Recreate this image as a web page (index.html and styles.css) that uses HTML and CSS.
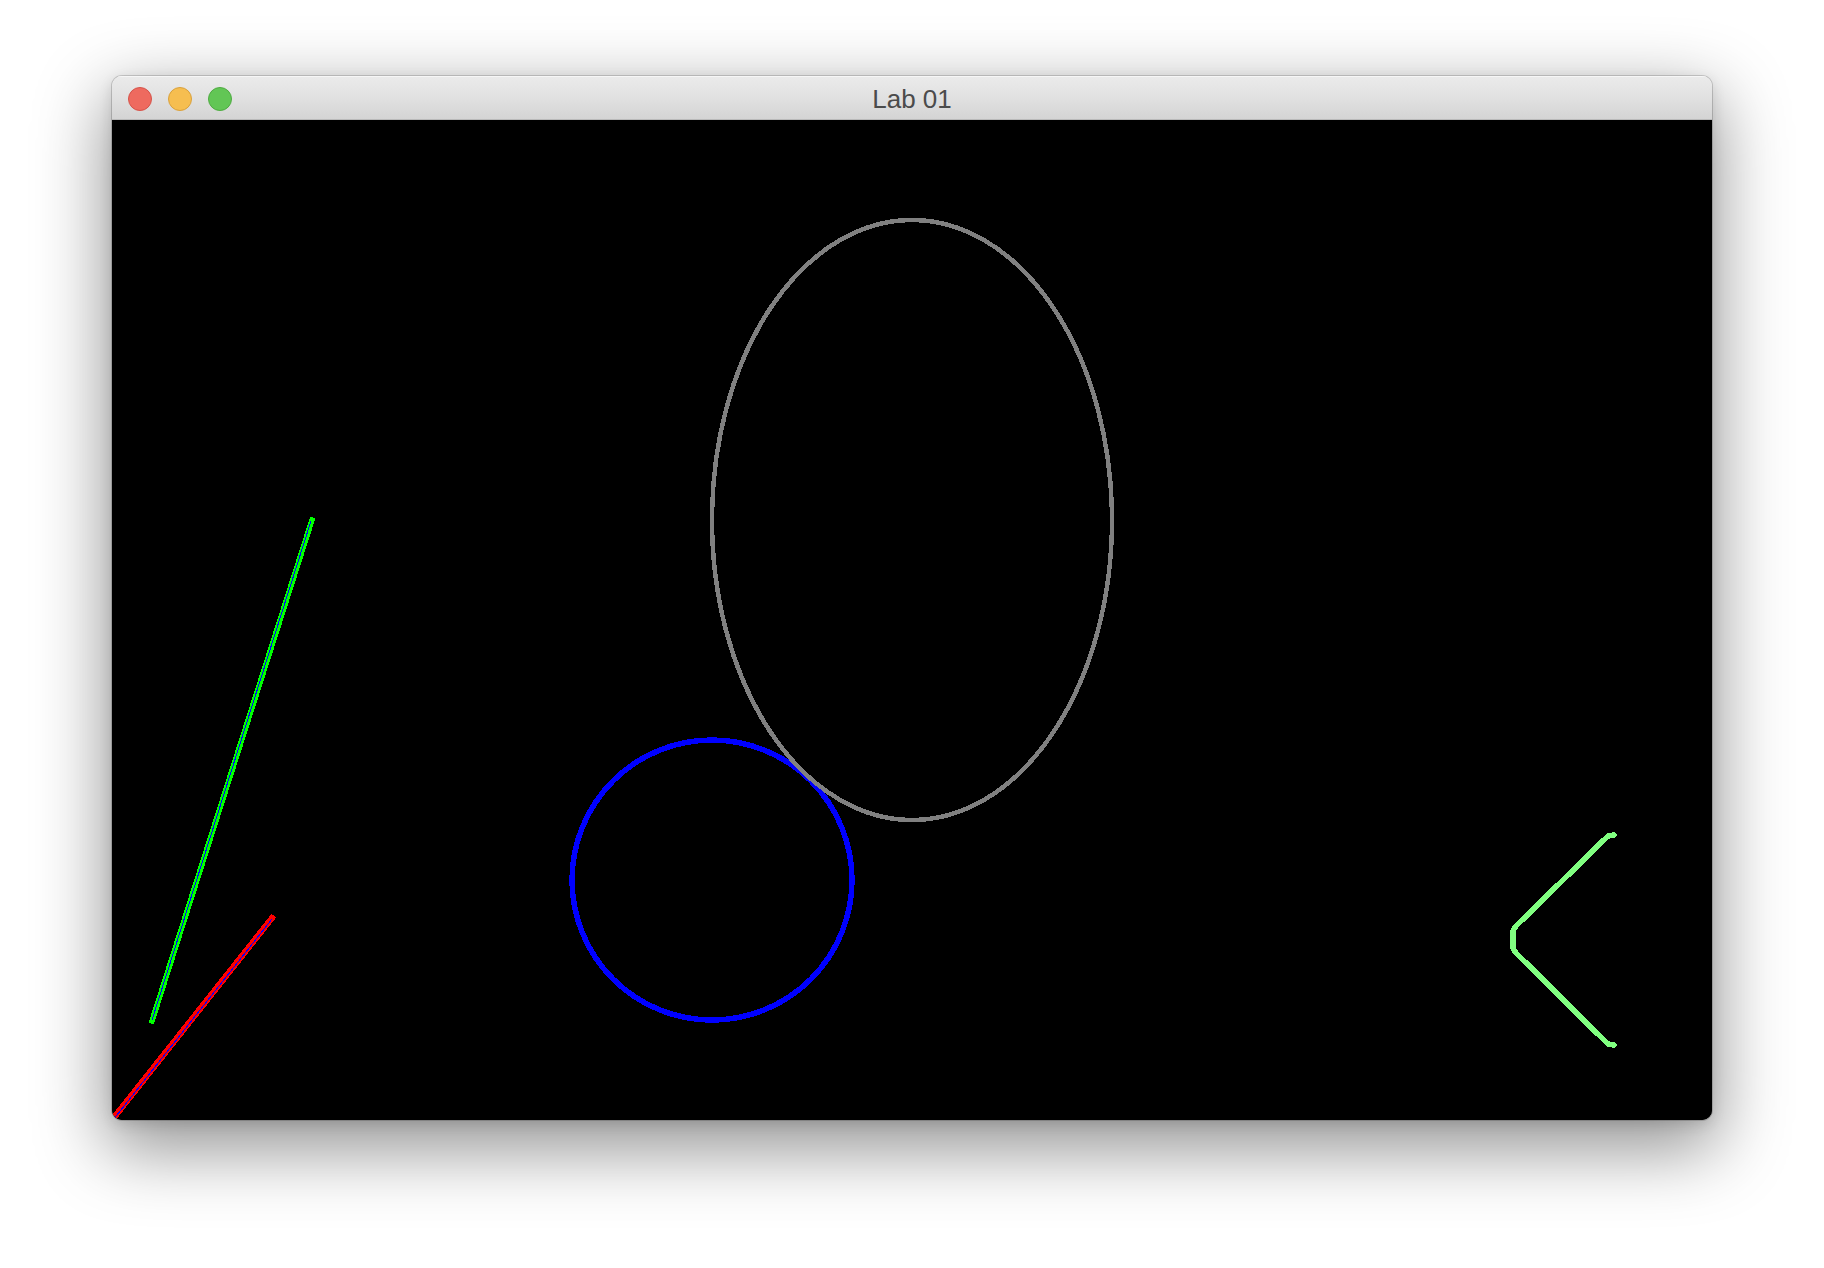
FILE: index.html
```html
<!DOCTYPE html>
<html>
<head>
<meta charset="utf-8">
<title>Lab 01</title>
<link rel="stylesheet" href="styles.css">
</head>
<body>
<div class="desktop">
  <div class="window">
    <div class="titlebar">
      <div class="lights">
        <span class="light red"></span>
        <span class="light yellow"></span>
        <span class="light green"></span>
      </div>
      <div class="title">Lab 01</div>
      <div class="spacer"></div>
    </div>
    <svg class="canvas" width="1600" height="1000" viewBox="0 0 1600 1000" xmlns="http://www.w3.org/2000/svg">
      <rect x="0" y="0" width="1600" height="1000" fill="#000"/>
      <circle cx="600" cy="760" r="140" fill="none" stroke="#0000ff" stroke-width="5.5" shape-rendering="crispEdges"/>
      <ellipse cx="800" cy="400" rx="200" ry="300" fill="none" stroke="#808080" stroke-width="4.5" shape-rendering="crispEdges"/>
      <line x1="200" y1="400" x2="40" y2="901" stroke="#00ff00" stroke-width="5.5" stroke-linecap="square" shape-rendering="crispEdges"/>
      <line x1="199" y1="401" x2="40" y2="900" stroke="#0000ff" stroke-width="1" shape-rendering="crispEdges"/>
      <line x1="160" y1="798" x2="0" y2="1000" stroke="#ff0000" stroke-width="6" stroke-linecap="square" shape-rendering="crispEdges"/>
      <line x1="160" y1="799" x2="1" y2="1000" stroke="#0000ff" stroke-width="1" shape-rendering="crispEdges"/>
      <polyline points="1502,715 1496,716 1404,806 1401,811 1401,828 1404,833 1496,924 1502,925" fill="none" stroke="#80ff80" stroke-width="5.5" stroke-linejoin="round" stroke-linecap="round" shape-rendering="crispEdges"/>
    </svg>
  </div>
</div>
</body>
</html>
```

FILE: styles.css
```css
html, body {
  margin: 0;
  padding: 0;
  background: #ffffff;
}

.desktop {
  width: 1824px;
  height: 1268px;
  box-sizing: border-box;
  padding: 76px 0 0 112px;
  background: #ffffff;
  overflow: hidden;
}

.window {
  width: 1600px;
  display: flex;
  flex-direction: column;
  border-radius: 10px;
  overflow: hidden;
  box-shadow: 0 0 0 1px rgba(0, 0, 0, 0.16), 0 24px 70px 6px rgba(0, 0, 0, 0.42), 0 4px 14px rgba(0, 0, 0, 0.12);
}

.titlebar {
  height: 43px;
  border-bottom: 1px solid #b9b9b9;
  background: linear-gradient(to bottom, #ebebeb 0%, #e1e1e1 50%, #d4d4d4 100%);
  display: grid;
  grid-template-columns: 1fr auto 1fr;
  align-items: center;
  box-shadow: inset 0 1px 0 #f6f6f6;
}

.lights {
  display: flex;
  gap: 16px;
  padding-left: 16px;
  padding-top: 1px;
}

.light {
  width: 24px;
  height: 24px;
  border-radius: 50%;
  box-sizing: border-box;
}

.light.red {
  background: #ee6a5f;
  border: 1px solid #d5534a;
}

.light.yellow {
  background: #f6be50;
  border: 1px solid #d9a13d;
}

.light.green {
  background: #62c655;
  border: 1px solid #4fab42;
}

.title {
  font-family: "Liberation Sans", "Helvetica Neue", Arial, sans-serif;
  font-size: 26px;
  color: #4b4b4b;
  line-height: 43px;
  padding-top: 2px;
}

.canvas {
  display: block;
  width: 1600px;
  height: 1000px;
  background: #000;
}
```
